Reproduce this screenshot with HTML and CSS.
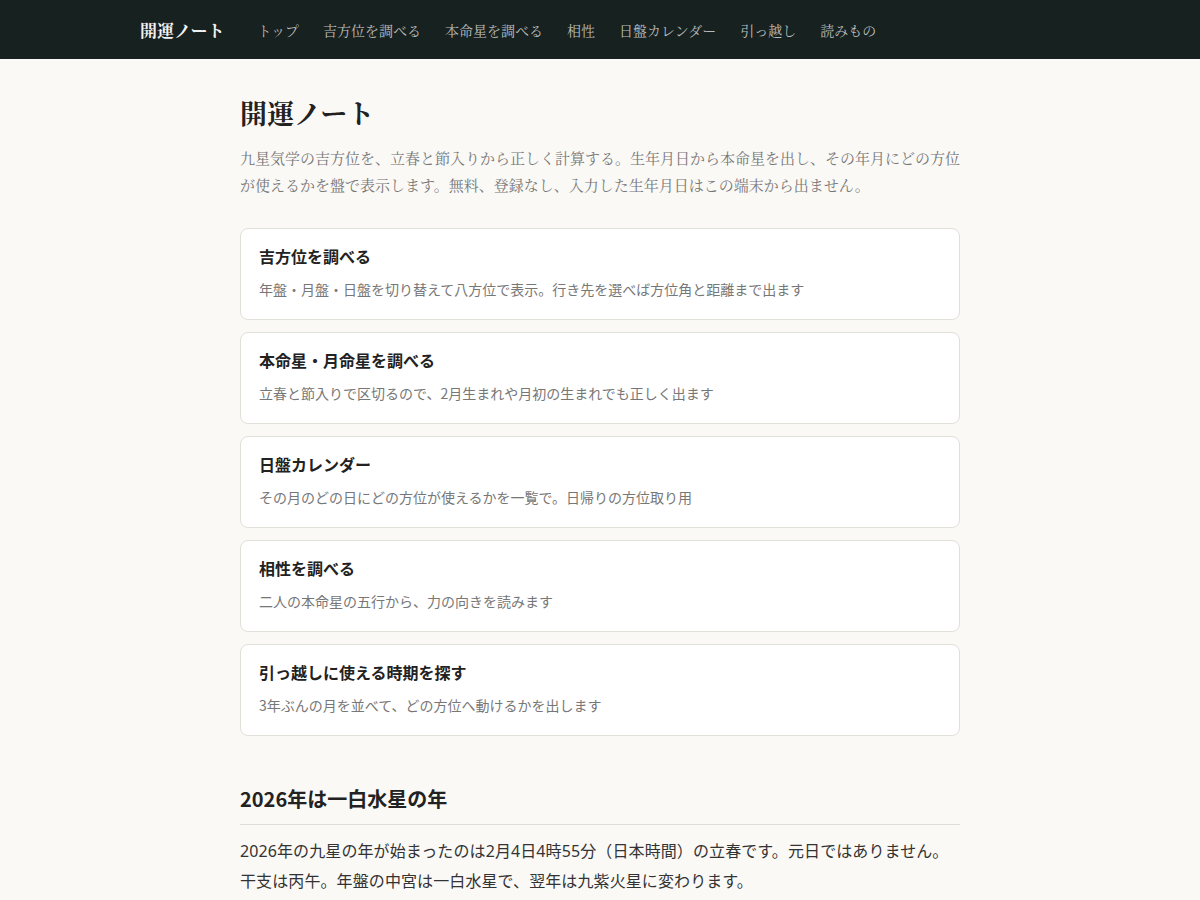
FILE: index.html
```html
<!DOCTYPE html>
<html lang="ja">
<head>
    <meta charset="UTF-8">
    <meta name="viewport" content="width=device-width, initial-scale=1.0">
    <title>開運ノート</title>
    <link rel="stylesheet" href="styles.css">
</head>
<body>

<header class="site-header">
    <div class="header-inner">
        <a class="brand" href="#">開運ノート</a>
        <nav class="nav">
            <a href="#">トップ</a>
            <a href="#">吉方位を調べる</a>
            <a href="#">本命星を調べる</a>
            <a href="#">相性</a>
            <a href="#">日盤カレンダー</a>
            <a href="#">引っ越し</a>
            <a href="#">読みもの</a>
        </nav>
    </div>
</header>

<main class="main">
    <h1 class="title">開運ノート</h1>
    <p class="lead">九星気学の吉方位を、立春と節入りから正しく計算する。生年月日から本命星を出し、その年月にどの方位が使えるかを盤で表示します。無料、登録なし、入力した生年月日はこの端末から出ません。</p>

    <div class="cards">
        <a class="card" href="#">
            <h2>吉方位を調べる</h2>
            <p>年盤・月盤・日盤を切り替えて八方位で表示。行き先を選べば方位角と距離まで出ます</p>
        </a>
        <a class="card" href="#">
            <h2>本命星・月命星を調べる</h2>
            <p>立春と節入りで区切るので、2月生まれや月初の生まれでも正しく出ます</p>
        </a>
        <a class="card" href="#">
            <h2>日盤カレンダー</h2>
            <p>その月のどの日にどの方位が使えるかを一覧で。日帰りの方位取り用</p>
        </a>
        <a class="card" href="#">
            <h2>相性を調べる</h2>
            <p>二人の本命星の五行から、力の向きを読みます</p>
        </a>
        <a class="card" href="#">
            <h2>引っ越しに使える時期を探す</h2>
            <p>3年ぶんの月を並べて、どの方位へ動けるかを出します</p>
        </a>
    </div>

    <section class="section">
        <h2>2026年は一白水星の年</h2>
        <p>2026年の九星の年が始まったのは2月4日4時55分（日本時間）の立春です。元日ではありません。干支は丙午。年盤の中宮は一白水星で、翌年は九紫火星に変わります。</p>
    </section>
</main>

</body>
</html>
```

FILE: styles.css
```css
body {
    margin: 0;
    padding: 0;
    background: #faf9f6;
    color: #222;
    font-family: "Noto Sans CJK JP", sans-serif;
}

a {
    text-decoration: none;
    color: inherit;
}

.site-header {
    background: #172120;
    height: 59px;
}

.header-inner {
    width: 920px;
    margin: 0 auto;
    height: 100%;
    display: flex;
    align-items: center;
}

.brand,
.nav a,
.title,
.lead {
    font-family: "Noto Serif CJK JP", "IPAexMincho", "IPAMincho", "Noto Sans CJK JP", serif;
}

.brand {
    font-weight: bold;
    font-size: 17px;
    color: #f2f2f2;
    margin-right: 33px;
}

.nav {
    display: flex;
    gap: 24px;
}

.nav a {
    font-size: 14px;
    color: #b8bcbb;
}

.main {
    width: 720px;
    margin: 0 auto;
    padding: 36px 0 40px;
}

.title {
    font-size: 27px;
    font-weight: bold;
    margin: 0 0 14px;
    line-height: 1.3;
}

.lead {
    font-size: 15px;
    line-height: 27px;
    color: #777;
    margin: 0 0 30px;
}

.cards {
    display: flex;
    flex-direction: column;
    gap: 12px;
}

.card {
    display: block;
    background: #fff;
    border: 1px solid #e2dfd8;
    border-radius: 8px;
    padding: 14px 18px 18px;
}

.card h2 {
    font-size: 16px;
    font-weight: bold;
    margin: 0 0 8px;
    line-height: 26px;
    color: #222;
}

.card p {
    font-size: 14px;
    color: #777;
    margin: 0;
    line-height: 24px;
}

.section {
    margin-top: 49px;
}

.section h2 {
    font-size: 20px;
    font-weight: bold;
    margin: 0 0 11px;
    padding-bottom: 11px;
    border-bottom: 1px solid #e0ddd6;
    line-height: 28px;
}

.section p {
    font-family: "Noto Sans", "Noto Sans CJK JP", sans-serif;
    font-size: 16px;
    letter-spacing: 0.1px;
    line-height: 30px;
    color: #333;
    margin: 0;
}
```
